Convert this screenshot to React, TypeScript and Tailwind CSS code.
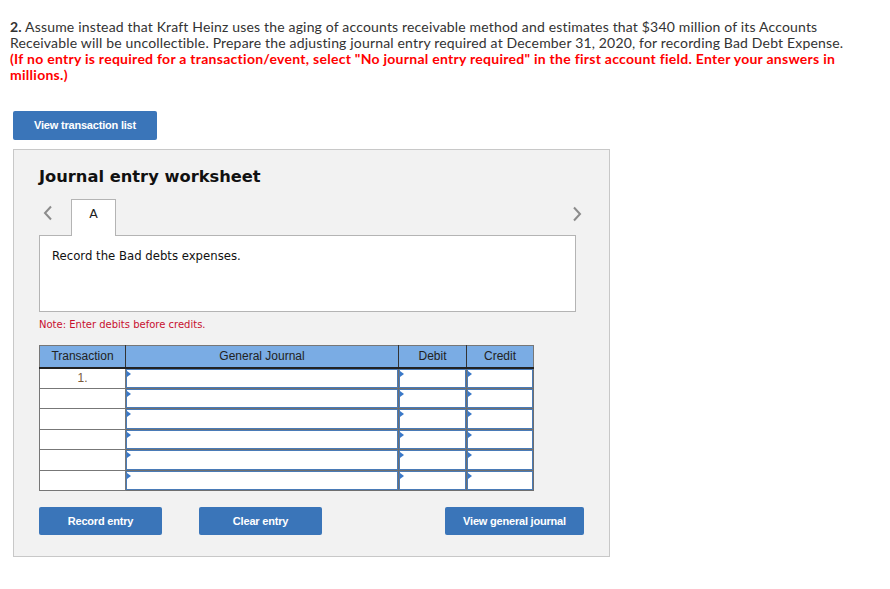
import React from "react";

const rows = [0, 1, 2, 3, 4, 5];

function Chevron({ dir }: { dir: "left" | "right" }) {
  return (
    <svg width="10" height="16" viewBox="0 0 10 16" className="block">
      <polyline
        points={dir === "left" ? "8,1.5 2,8 8,14.5" : "2,1.5 8,8 2,14.5"}
        fill="none"
        stroke="#8c8c8c"
        strokeWidth="2"
      />
    </svg>
  );
}

function InputCell() {
  return (
    <div className="relative h-full border border-[#4a7bb7] bg-white">
      <span className="absolute left-0 top-[1px] h-0 w-0 border-y-[3px] border-l-[4px] border-y-transparent border-l-[#3a78c8]" />
    </div>
  );
}

function BlueButton({ label, className }: { label: string; className?: string }) {
  return (
    <button
      className={`flex items-center justify-center rounded-[2px] bg-[#3a75b9] text-[11px] font-bold tracking-[-0.2px] text-white ${className}`}
      style={{ fontFamily: '"Liberation Sans", Arial, sans-serif' }}
    >
      {label}
    </button>
  );
}

export default function App() {
  return (
    <div className="min-h-[589px] w-[890px] bg-white pl-[10px] pt-[19px]">
      <div
        className="text-[14px] leading-[16px] text-[#333]"
        style={{ fontFamily: 'Lato, "Open Sans", sans-serif' }}
      >
        <p className="whitespace-nowrap tracking-[0.17px]">
          <span className="font-bold">2.</span> Assume instead that Kraft Heinz uses the aging of accounts receivable method and estimates that $340 million of its Accounts
          <br />
          Receivable will be uncollectible. Prepare the adjusting journal entry required at December 31, 2020, for recording Bad Debt Expense.
        </p>
        <p className="whitespace-nowrap font-bold tracking-[0.27px] text-[#f00]">
          (If no entry is required for a transaction/event, select "No journal entry required" in the first account field. Enter your answers in
          <br />
          millions.)
        </p>
      </div>

      <BlueButton label="View transaction list" className="ml-[3px] mt-[28px] h-[29px] w-[144px]" />

      <div className="ml-[3px] mt-[9px] h-[408px] w-[597px] border border-[#c8c8c8] bg-[#f2f2f2] px-[25px]">
        <h2
          className="mt-[17px] h-[20px] text-[16.3px] font-bold leading-[20px] text-[#111]"
          style={{ fontFamily: '"DejaVu Sans", Verdana, sans-serif' }}
        >
          Journal entry worksheet
        </h2>

        <div className="mt-[12px] w-[537px]" style={{ fontFamily: '"DejaVu Sans", Verdana, sans-serif' }}>
          <div className="relative flex h-[36px] items-start">
            <div className="ml-[4px] mt-[6px]">
              <Chevron dir="left" />
            </div>
            <div className="relative z-10 -mb-px ml-[18px] flex h-[37px] w-[45px] justify-center border border-b-0 border-[#b4b4b4] bg-white pt-[5px] text-[12.5px] text-[#222]">
              A
            </div>
            <div className="ml-auto mr-[-6px] mt-[7px]">
              <Chevron dir="right" />
            </div>
          </div>
          <div className="h-[77px] border border-[#b4b4b4] bg-white px-[12px] pt-[12px] text-[11.7px] leading-[16px] text-[#111]">
            Record the Bad debts expenses.
          </div>
          <p className="mt-[7px] text-[10px] leading-[12px] text-[#c8102e]">Note: Enter debits before credits.</p>
        </div>

        <table
          className="mt-[14px] w-[494px] table-fixed border-collapse border border-[#777]"
          style={{ fontFamily: '"Liberation Sans", Arial, sans-serif' }}
        >
          <colgroup>
            <col className="w-[86px]" />
            <col className="w-[273px]" />
            <col className="w-[68px]" />
            <col className="w-[67px]" />
          </colgroup>
          <thead>
            <tr className="h-[22px] bg-[#7aace4] text-[12px] text-[#222]">
              <th className="border-b-2 border-r border-b-[#222] border-r-[#333] font-normal">Transaction</th>
              <th className="border-b-2 border-r border-b-[#222] border-r-[#333] font-normal">General Journal</th>
              <th className="border-b-2 border-r border-b-[#222] border-r-[#333] font-normal">Debit</th>
              <th className="border-b-2 border-b-[#222] font-normal">Credit</th>
            </tr>
          </thead>
          <tbody>
            {rows.map((r) => (
              <tr key={r} className="h-[20.5px]">
                <td className="border border-[#777] bg-white p-0 text-center text-[12px] text-[#7a5a3a]">
                  {r === 0 ? "1." : ""}
                </td>
                <td className="h-[20.5px] border border-[#6f6f6f] p-0">
                  <InputCell />
                </td>
                <td className="h-[20.5px] border border-[#6f6f6f] p-0">
                  <InputCell />
                </td>
                <td className="h-[20.5px] border border-[#6f6f6f] p-0">
                  <InputCell />
                </td>
              </tr>
            ))}
          </tbody>
        </table>

        <div className="mt-[16px] flex w-[545px]">
          <BlueButton label="Record entry" className="h-[28px] w-[123px]" />
          <BlueButton label="Clear entry" className="ml-[37px] h-[28px] w-[123px]" />
          <BlueButton label="View general journal" className="ml-auto h-[28px] w-[139px]" />
        </div>
      </div>
    </div>
  );
}
